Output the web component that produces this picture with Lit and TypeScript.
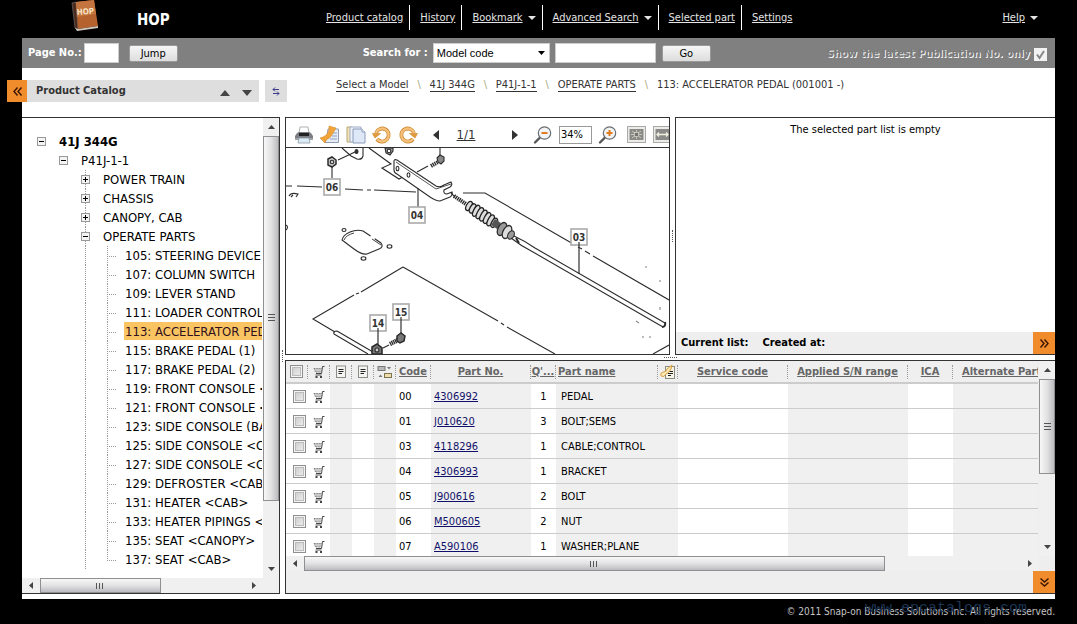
import { LitElement, html, svg, css, nothing } from "lit";
import { customElement, property, state } from "lit/decorators.js";
import { classMap } from "lit/directives/class-map.js";
import { styleMap } from "lit/directives/style-map.js";

const fontStack = css`"DejaVu Sans Condensed", "DejaVu Sans", sans-serif`;

/* ---------- icons ---------- */

const bookIcon = html`<svg width="30" height="32" viewBox="0 0 30 32" aria-hidden="true">
  <path d="M1 3 L5 2 L7 29 L4 28 Z" fill="#4a2a1c" stroke="#777" stroke-width=".6" />
  <path d="M5 2 L23 0 L27 26 L7 29 Z" fill="#b5622f" />
  <path d="M5 2 L23 0 L25 14 L6 17 Z" fill="#c4753f" />
  <path d="M4 28 L7 29 L27 26 L27 28 L6 31 Z" fill="#cfc6bb" />
  <text x="6" y="15" font-size="8" font-weight="700" fill="#f6e3c4" transform="rotate(-5 6 15)">HOP</text>
</svg>`;

const printerIcon = html`<svg width="20" height="20" viewBox="0 0 20 20" aria-hidden="true">
  <path d="M6 2 H14 L15 9 H5 Z" fill="#fff" stroke="#b0b0b0" />
  <path d="M3 8 L5 7 H15 L17 8 L19 11 V15 H1 V11 Z" fill="#7b7e82" />
  <path d="M5 9.500 H15" stroke="#222" stroke-width="3" />
  <path d="M1 14 H19" stroke="#c3c6c9" />
  <path d="M5 13 H15 L16 18 H4 Z" fill="#dcecf7" stroke="#8a9aa6" stroke-width=".8" />
</svg>`;

const exportIcon = html`<svg width="20" height="20" viewBox="0 0 20 20" aria-hidden="true">
  <path d="M8 4 H18.500 V17.500 H5 L7 11 Z" fill="#e6ecf5" stroke="#8f9db5" />
  <path d="M13 8 H17 M12 11 H17 M10 14 H17" stroke="#8fa0c0" />
  <path d="M9 1 L16 3 L13 8 Q11 13 6 15 L5 18 L0 13 L3 12 Q8 10 9 5 Z" fill="#f0a43a" stroke="#d98a22" stroke-width=".6" />
</svg>`;

const copyIcon = html`<svg width="20" height="20" viewBox="0 0 20 20" aria-hidden="true">
  <path d="M1 2 H6 V17 H1 Z" fill="#f3e2b4" stroke="#b9a874" />
  <path d="M4 2 H15 V17 H4 Z" fill="#eef2f9" stroke="#9fadc6" />
  <path d="M7 4 H16 L19 7 V18 H7 Z" fill="#dfe8f6" stroke="#8c9dbc" />
  <path d="M16 4 V7 H19" fill="#fff" stroke="#8c9dbc" />
</svg>`;

const rotateIcon = (clockwise: boolean) => html`<svg width="20" height="20" viewBox="0 0 20 20" aria-hidden="true">
  <g transform=${clockwise ? "" : "translate(20 0) scale(-1 1)"}>
    <path d="M15 14 A6.500 6.500 0 1 1 16 8" fill="none" stroke="#c9842a" stroke-width="3.800" />
    <path d="M15 14 A6.500 6.500 0 1 1 16 8" fill="none" stroke="#f5c07a" stroke-width="2.400" />
    <path d="M11.500 8.500 L19.500 8.500 L17 13 Z" fill="#e49a38" stroke="#c9842a" stroke-width=".6" />
  </g>
</svg>`;

const magnifier = (plus: boolean) => html`<svg width="20" height="20" viewBox="0 0 20 20" aria-hidden="true">
  <path d="M2 17.500 L7 12.500" stroke="#555" stroke-width="2.400" stroke-linecap="round" />
  <circle cx="11.500" cy="8" r="6.200" fill="#f1f3f5" stroke="#6b6f73" stroke-width="1.200" />
  <path d="M8.500 8 H14.500" stroke="#e07b1f" stroke-width="2" />
  ${plus ? svg`<path d="M11.500 5 V11" stroke="#e07b1f" stroke-width="2" />` : nothing}
</svg>`;

const fitIcon = (wide: boolean) => html`<svg width="20" height="18" viewBox="0 0 20 18" aria-hidden="true">
  <rect x=".5" y=".5" width="18" height="16" fill="#ecebe8" stroke="#a9a9a7" />
  <rect x="2.500" y="3" width="14" height="11" fill="#8a8b88" />
  ${wide
    ? svg`<path d="M4 8.500 H15 M6 6.500 L4 8.500 L6 10.500 M13 6.500 L15 8.500 L13 10.500" fill="none" stroke="#f0efdc" stroke-width="1.300" />`
    : svg`<path d="M5 5 L14 12 M14 5 L5 12 M9.500 4 V13 M4 8.500 H15" stroke="#d5d4c2" stroke-width=".8" />
        <rect x="7.500" y="6.500" width="4" height="4" fill="#74756f" stroke="#e5e4d5" stroke-width=".6" />`}
</svg>`;

const cartIcon = html`<svg width="12" height="12" viewBox="0 0 12 12" aria-hidden="true">
  <path d="M11.500 .5 H9.500 L8.500 7.500 H3" fill="none" stroke="#444" />
  <path d="M1 2.500 H9 L8.500 6 H2.500 Z" fill="#c9c9c9" stroke="#666" stroke-width=".8" stroke-dasharray="1 .6" />
  <path d="M2.500 9 H8.500" stroke="#555" />
  <rect x="2.500" y="10" width="2" height="2" fill="#444" /><rect x="7" y="10" width="2" height="2" fill="#444" />
</svg>`;

const noteIcon = html`<svg width="12" height="14" viewBox="0 0 12 14" aria-hidden="true">
  <rect x="1.500" y="1" width="9" height="11.500" fill="#f4f4f0" stroke="#8b8b88" />
  <path d="M3.500 4.500 H8.500 M3.500 6.500 H8.500 M3.500 8.500 H7" stroke="#222" />
</svg>`;

const swapIcon = html`<svg width="16" height="14" viewBox="0 0 16 14" aria-hidden="true">
  <rect x="1" y="1.500" width="7" height="4" fill="#b9b9b9" stroke="#777" />
  <rect x="7.500" y="8.500" width="7" height="4" fill="#f0dcaa" stroke="#7c7350" />
  <path d="M10 2 H14 L12 4.500 Z M1.500 12 H5.500 L3.500 9.500 Z" fill="#777" />
</svg>`;

const memoIcon = html`<svg width="16" height="16" viewBox="0 0 16 16" aria-hidden="true">
  <rect x="5.500" y="2.500" width="9" height="12" fill="#f7f3e6" stroke="#8b8b80" />
  <path d="M8 7.500 H13 M8 9.500 H13 M8 11.500 H11" stroke="#222" />
  <path d="M1 12 Q0 8 4 8 Q6 8 7 5 L12 1 L11 5 Q9 9 6 10 Q4 14 1 12 Z" fill="#f9e6bb" stroke="#d9a23a" />
</svg>`;

const doubleChevron = (dir: "left" | "right" | "down") => {
  const turn = { left: 180, right: 0, down: 90 }[dir];
  return html`<svg width="11" height="11" viewBox="0 0 11 11" aria-hidden="true">
    <path d="M1.500 1.500 L5 5.500 L1.500 9.500 M5.500 1.500 L9 5.500 L5.500 9.500" fill="none" stroke="#3a1505" stroke-width="1.400" transform="rotate(${turn} 5.5 5.5)" />
  </svg>`;
};

const triangle = (dir: "up" | "down" | "left" | "right", w = 8, h = 4) => {
  const d = {
    up: `M0 ${h} H${w} L${w / 2} 0 Z`,
    down: `M0 0 H${w} L${w / 2} ${h} Z`,
    left: `M${w} 0 V${h} L0 ${h / 2} Z`,
    right: `M0 0 V${h} L${w} ${h / 2} Z`,
  }[dir];
  return html`<svg width=${w} height=${h} viewBox="0 0 ${w} ${h}" aria-hidden="true"><path d=${d} fill="currentColor" /></svg>`;
};

/* ---------- scroll bar ---------- */

@customElement("scroll-track")
export class ScrollTrack extends LitElement {
  @property({ type: Boolean, reflect: true }) horizontal = false;
  @property({ type: Number }) size = 50;

  static styles = css`
    :host { display: flex; flex-direction: column; width: 16px; background: #f0f0f0; color: #444; }
    :host([horizontal]) { flex-direction: row; width: auto; height: 15px; }
    .arrow { flex: none; width: 16px; height: 18px; padding: 0; border: 0; background: none; color: inherit; display: flex; align-items: center; justify-content: center; }
    :host([horizontal]) .arrow { width: 18px; height: 15px; }
    .rail { flex: 1; min-height: 0; min-width: 0; display: flex; flex-direction: inherit; }
    .thumb { box-sizing: border-box; border: 1px solid #8f8f92; display: flex; align-items: center; justify-content: center; background: linear-gradient(90deg, #f7f7f7, #e2e2e4 50%, #bcbcc0); }
    :host([horizontal]) .thumb { background: linear-gradient(#f7f7f7, #e2e2e4 50%, #bcbcc0); }
    .grip { width: 7px; height: 8px; background: repeating-linear-gradient(#555 0 1px, transparent 1px 3px); }
    :host([horizontal]) .grip { width: 8px; height: 6px; background: repeating-linear-gradient(90deg, #555 0 1px, transparent 1px 3px); }
  `;

  render() {
    const side = this.horizontal ? "width" : "height";
    return html`
      <button class="arrow" aria-label="Scroll back">${this.horizontal ? triangle("left", 4, 7) : triangle("up", 7, 4)}</button>
      <div class="rail"><div class="thumb" style=${styleMap({ [side]: `${this.size}%` })}><span class="grip"></span></div></div>
      <button class="arrow" aria-label="Scroll forward">${this.horizontal ? triangle("right", 4, 7) : triangle("down", 7, 4)}</button>
    `;
  }
}

/* ---------- catalog tree ---------- */

interface TreeRow { level: number; label: string; open?: boolean; }

const treeRows: TreeRow[] = [
  { level: 0, label: "41J 344G", open: true },
  { level: 1, label: "P41J-1-1", open: true },
  { level: 2, label: "POWER TRAIN", open: false },
  { level: 2, label: "CHASSIS", open: false },
  { level: 2, label: "CANOPY, CAB", open: false },
  { level: 2, label: "OPERATE PARTS", open: true },
  ...[
    "105: STEERING DEVICE", "107: COLUMN SWITCH", "109: LEVER STAND", "111: LOADER CONTROL",
    "113: ACCELERATOR PEDAL", "115: BRAKE PEDAL (1)", "117: BRAKE PEDAL (2)",
    "119: FRONT CONSOLE <CANOPY>", "121: FRONT CONSOLE <CAB>", "123: SIDE CONSOLE (BASE)",
    "125: SIDE CONSOLE <CANOPY>", "127: SIDE CONSOLE <CAB>", "129: DEFROSTER <CAB>",
    "131: HEATER <CAB>", "133: HEATER PIPINGS <CAB>", "135: SEAT <CANOPY>", "137: SEAT <CAB>",
  ].map((label) => ({ level: 3, label })),
];

@customElement("catalog-tree")
export class CatalogTree extends LitElement {
  @state() private selected = "113: ACCELERATOR PEDAL";

  static styles = css`
    :host { display: grid; grid-template: minmax(0, 1fr) auto / minmax(0, 1fr) auto; border: 1px solid #333; border-left: 0; font: 13px/19px ${fontStack}; overflow: hidden; background: #fff; }
    .rows { overflow: hidden; list-style: none; margin: 0 1px 0 0; padding: 14px 0 6px 15px; }
    .row { display: flex; height: 19px; white-space: nowrap; }
    .cell { flex: none; width: 22px; height: 19px; display: flex; align-items: center; }
    .line { background: repeating-linear-gradient(#999 0 1px, transparent 1px 2px) 4px 0 / 1px 100% no-repeat; }
    .leaf { background: repeating-linear-gradient(#999 0 1px, transparent 1px 2px) 4px 0 / 1px 100% no-repeat, repeating-linear-gradient(90deg, #999 0 1px, transparent 1px 2px) 4px 10px / 10px 1px no-repeat; }
    .last { background-size: 1px 10px, 10px 1px; }
    .box { width: 9px; height: 9px; padding: 0; border: 1px solid #999; background: linear-gradient(#000, #000) center / 5px 1px no-repeat, #f4f4f4; }
    .plus { background: linear-gradient(#000, #000) center / 5px 1px no-repeat, linear-gradient(#000, #000) center / 1px 5px no-repeat, #f4f4f4; }
    .label { color: #000; text-decoration: none; margin-left: -1px; padding: 0 1px; height: 18px; line-height: 19px; }
    .root { font-weight: 700; }
    .on { background: #fac463; color: #30101c; }
    .corner { background: #f0f0f0; }
  `;

  render() {
    return html`
      <ul class="rows">
        ${treeRows.map((row, i) => html`<li class="row">
          ${Array.from({ length: row.level }, (_, depth) =>
            html`<span class=${classMap({ cell: true, line: depth === 2 })}></span>`)}
          ${row.open === undefined
            ? html`<span class=${classMap({ cell: true, leaf: true, last: i === treeRows.length - 1 })}></span>`
            : html`<span class=${classMap({ cell: true, line: row.level === 2 })}>
                <button class=${classMap({ box: true, plus: !row.open })} aria-label="Toggle ${row.label}"></button>
              </span>`}
          <a class=${classMap({ label: true, root: row.level === 0, on: row.label === this.selected })} href="#"
            @click=${(e: Event) => { e.preventDefault(); this.selected = row.label; }}>${row.label}</a>
        </li>`)}
      </ul>
      <scroll-track .size=${86}></scroll-track>
      <scroll-track horizontal .size=${59}></scroll-track>
      <span class="corner"></span>
    `;
  }
}

/* ---------- parts drawing ---------- */

const callout = (label: string, x: number, y: number) => svg`
  <rect x=${x - 8} y=${y - 8} width="16" height="16" fill="#fff" stroke="#aaa" stroke-width="1.600" />
  <text x=${x} y=${y + 4} text-anchor="middle" font-size="10" font-weight="700" font-family="DejaVu Sans Condensed, DejaVu Sans, sans-serif" fill="#333">${label}</text>`;

const bellows = Array.from({ length: 8 }, (_, i) => svg`
  <ellipse cx=${469 + i * 3.6} cy=${206 + i * 2.4} rx="2.600" ry=${5 + (i > 1 && i < 7 ? 1 : 0)} transform="rotate(-58 ${469 + i * 3.6} ${206 + i * 2.4}) rotate(86 ${469 + i * 3.6} ${206 + i * 2.4})" fill="#ddd" stroke="#222" stroke-width="1.300" />`);

const drawing = html`<svg class="drawing" viewBox="286 148 383 206" preserveAspectRatio="xMinYMin slice" role="img" aria-label="Accelerator pedal assembly">
  <g fill="none" stroke="#2c2c2c" stroke-width="1.100">
    <path d="M342 148 L351 156 L357 159 Q362 160 363 156 V148" />
    <ellipse cx="356.500" cy="151.500" rx="1.500" ry="2" fill="#333" />
    <path d="M338 160 L355 152 M369 148 L391 164 L382 168 L399 179 L410 173 M440 148 V155" />
    <path d="M328 159 L332 157 L336 160 L336 164 L332 167 L328 165 Z" fill="#ccc" stroke-width="1.500" /><circle cx="332" cy="162" r="1.800" />
    <path d="M385 148 L386 153 L390 155 L393 151 L393 148 Z" fill="#999" /><circle cx="389" cy="151" r="1.800" fill="#fff" />
    <path d="M332 167 V178" />
    <path d="M394 161 Q394 159 397 160 L436 186 Q440 188 444 185 L451 182 Q453 185 450 187 L444 190 Q443 194 447 194 L452 192 Q453 195 450 197 L440 201 Q436 201 430 197 L397 174 Q394 173 394 170 Z" fill="#fff" />
    <path d="M396 162 L436 189 L451 184" stroke-width=".8" />
    <ellipse cx="397.500" cy="168.500" rx="1.400" ry="2.200" /><ellipse cx="408.500" cy="175" rx="1.400" ry="2.200" />
    <path d="M417 172 L428 166" />
    <path d="M431 166 L438 162" stroke-width="4" stroke-dasharray="1.300 .8" /><path d="M437 158 L440 155 L444 157 L444 161 L441 164 L438 162 Z" fill="#888" />
    <path d="M418 188 V207" />
    <path d="M286 186 L292 186 M297 186 L322 187 M345 189 L363 190 M367 190 L371 190 M374 190 L416 192 M463 193 L485 193 L575 245 M578 247 L582 249 M585 251 L590 254 M593 256 L669 300" />
    <path d="M289 196 Q291 192 298 194 L296 197 M291 197 L293 195" /><path d="M286 225 Q289 227 286 230" />
    <path d="M454 196 L466 204" stroke-width="4" stroke-dasharray="1.400 .7" /><path d="M451 193 L455 197" />
    ${bellows}
    <path d="M493 222 L499 226" stroke-width="7" stroke="#555" />
    <ellipse cx="502" cy="229" rx="4" ry="7" transform="rotate(28 502 229)" fill="#999" stroke-width="1.300" />
    <ellipse cx="507" cy="232" rx="4" ry="7" transform="rotate(28 507 232)" fill="#ddd" stroke-width="1.300" />
    <ellipse cx="511" cy="235" rx="3" ry="4.500" transform="rotate(28 511 235)" fill="#999" />
    <path d="M514 236 Q525 241 535 248 L665 323 M511 238 Q521 246 533 252 L663 327" />
    <path d="M516 238 L519 243 M662 327 Q666 327 665 322" stroke-width="2" />
    <path d="M342 240 Q343 235 350 232 Q357 229 363 231 L381 243 Q384 247 379 249 L367 254 Q362 255 354 249 Z" stroke-dasharray="34 5 60" />
    <path d="M344 240 Q346 235 354 233 M372 239 L381 245" stroke-width=".9" />
    <ellipse cx="344" cy="230" rx="2" ry="1.500" /><ellipse cx="389.500" cy="246.500" rx="2.400" ry="1.700" /><ellipse cx="363.500" cy="258.500" rx="2.400" ry="1.700" />
    <path d="M403 267 L361 292 M359 293 L356 294 M354 295 L313 319 L335 332 M403 267 L498 321 M501 323 L504 325 M507 327 L555 354 M653 354 L669 345" />
    <path d="M337 331 L373 352 M334 334 L368 354 M337 331 Q333 331 334 334" />
    <path d="M372 347 L377 344 L382 348 L382 354 H372 Z" fill="#777" stroke-width="1.600" /><circle cx="377" cy="350" r="2" fill="#ccc" />
    <path d="M383 348 L389 345" /><path d="M390 344 L398 340" stroke-width="4.500" stroke-dasharray="1.300 .6" />
    <path d="M397 336 L401 333 L405 336 L404 341 L400 343 L397 341 Z" fill="#777" stroke-width="1.500" />
    <path d="M646 266 V268 M660 280 V282 M660 307 V310 M636 321 L639 323 M643 336 V338 M650 336 V338" stroke="#888" />
  </g>
  ${callout("06", 332, 187)} ${callout("04", 417, 215)} ${callout("03", 579, 237)} ${callout("14", 378, 323)} ${callout("15", 401, 312)}
  <path d="M579 242 V274 M378 328 V345 M401 317 V333" stroke="#333" stroke-width="1.200" />
</svg>`;

@customElement("drawing-panel")
export class DrawingPanel extends LitElement {
  static styles = css`
    :host { display: flex; flex-direction: column; border: 1px solid #333; overflow: hidden; background: #fff; font: 11px/14px ${fontStack}; }
    .tools { display: flex; align-items: center; height: 30px; padding: 4px 0 0 8px; gap: 6px; border-bottom: 1px solid #333; box-sizing: border-box; flex: none; color: #333; }
    .tool { flex: none; width: 20px; height: 20px; padding: 0; border: 0; background: none; color: inherit; display: flex; align-items: center; justify-content: center; }
    .pages { display: flex; align-items: center; gap: 3px; padding: 0 2px; }
    .page { font-size: 13px; line-height: 16px; color: #333; width: 34px; margin-right: 19px; text-align: center; }
    .zoom { flex: none; width: 33px; height: 18px; box-sizing: border-box; border: 1px solid #999; padding: 0 1px; font: 11px ${fontStack}; }
    .fits { display: flex; gap: 6px; margin-left: 3px; }
    .drawing { flex: 1; min-height: 0; width: 100%; display: block; }
  `;

  render() {
    return html`
      <div class="tools">
        <button class="tool" aria-label="Print">${printerIcon}</button>
        <button class="tool" aria-label="Export">${exportIcon}</button>
        <button class="tool" aria-label="Copy">${copyIcon}</button>
        <button class="tool" aria-label="Rotate left">${rotateIcon(false)}</button>
        <button class="tool" aria-label="Rotate right">${rotateIcon(true)}</button>
        <div class="pages">
          <button class="tool" aria-label="Previous page">${triangle("left", 6, 10)}</button>
          <a class="page" href="#">1/1</a>
          <button class="tool" aria-label="Next page">${triangle("right", 6, 10)}</button>
        </div>
        <button class="tool" aria-label="Zoom out">${magnifier(false)}</button>
        <input class="zoom" aria-label="Zoom level" value="34%" />
        <button class="tool" aria-label="Zoom in">${magnifier(true)}</button>
        <div class="fits">
          <button class="tool" aria-label="Fit page">${fitIcon(false)}</button>
          <button class="tool" aria-label="Fit width">${fitIcon(true)}</button>
        </div>
      </div>
      ${drawing}
    `;
  }
}

/* ---------- parts table ---------- */

const columns: { width?: number; label?: string; icon?: unknown; name: string; lead?: boolean }[] = [
  { width: 22, name: "Select all" },
  { width: 22, name: "Cart", icon: cartIcon },
  { width: 22, name: "Note", icon: noteIcon },
  { width: 22, name: "Memo", icon: noteIcon },
  { width: 22, name: "Interchange", icon: swapIcon },
  { width: 35, name: "Code", label: "Code" },
  { width: 100, name: "Part No.", label: "Part No." },
  { width: 25, name: "Quantity", label: "Q'..." },
  { width: 102, name: "Part name", label: "Part name", lead: true },
  { width: 20, name: "Remark", icon: memoIcon },
  { width: 110, name: "Service code", label: "Service code" },
  { width: 120, name: "Applied S/N range", label: "Applied S/N range" },
  { width: 45, name: "ICA", label: "ICA" },
  { name: "Alternate Part", label: "Alternate Part", lead: true },
];

const parts: [string, string, number, string][] = [
  ["00", "4306992", 1, "PEDAL"],
  ["01", "J010620", 3, "BOLT;SEMS"],
  ["03", "4118296", 1, "CABLE;CONTROL"],
  ["04", "4306993", 1, "BRACKET"],
  ["05", "J900616", 2, "BOLT"],
  ["06", "M500605", 2, "NUT"],
  ["07", "A590106", 1, "WASHER;PLANE"],
];

@customElement("parts-table")
export class PartsTable extends LitElement {
  static styles = css`
    :host { display: grid; grid-template: minmax(0, 1fr) auto auto / minmax(0, 1fr) auto; border: 1px solid #333; border-right: 0; overflow: hidden; background: #eee; font: 11px/14px ${fontStack}; }
    .view { overflow: hidden; background: #fff; margin-right: 1px; }
    .table { border-collapse: separate; border-spacing: 0; table-layout: fixed; width: 100%; min-width: 767px; }
    .head { height: 23px; box-sizing: border-box; padding: 0; background: #efefef; border-bottom: 2px solid #ccc; font-weight: 700; color: #666; white-space: nowrap; overflow: hidden; }
    .slot { display: flex; align-items: center; justify-content: center; height: 14px; border-right: 1px dotted #999; }
    .lead { justify-content: flex-start; padding-left: 2px; }
    .final { padding-left: 9px; }
    .sort { padding: 0; border: 0; background: none; font: inherit; color: inherit; text-decoration: underline; }
    .cell { height: 25px; box-sizing: border-box; padding: 1px 0 0 3px; border-bottom: 1px solid #ccc; color: #000; white-space: nowrap; vertical-align: middle; }
    .shade { background: #f0f0f0; }
    .name { padding-left: 5px; }
    .mid { padding-left: 0; text-align: center; }
    .icon { display: flex; justify-content: center; }
    .tick { appearance: none; display: block; margin: 0 0 0 7px; width: 13px; height: 13px; border: 1px solid #8e8f8f; background: linear-gradient(135deg, #c9c9cb, #f2f2f2); box-shadow: inset 0 0 0 1px #f4f4f4, inset 0 0 0 2px #bbb; }
    .all { margin-left: 0; }
    .part { color: #10106a; }
    .base { grid-column: 1 / -1; display: flex; justify-content: flex-end; height: 22px; }
    .more { width: 22px; height: 22px; padding: 0; border: 0; background: #f08c2c; display: flex; align-items: center; justify-content: center; }
  `;

  render() {
    return html`
      <div class="view">
        <table class="table">
          <colgroup>${columns.map((c) => html`<col style=${styleMap(c.width ? { width: `${c.width}px` } : {})} />`)}</colgroup>
          <thead><tr>
            ${columns.map((c, i) => html`<th class="head" scope="col" aria-label=${c.name}>
              <div class=${classMap({ slot: true, lead: !!c.lead, final: i === columns.length - 1 })}>
                ${i === 0 ? html`<input class="tick all" type="checkbox" aria-label="Select all" />` : c.label ? html`<button class="sort">${c.label}</button>` : c.icon}
              </div></th>`)}
          </tr></thead>
          <tbody>
            ${parts.map(([code, part, qty, name]) => html`<tr>
              <td class="cell mid"><input class="tick" type="checkbox" aria-label="Select ${part}" /></td>
              <td class="cell mid"><span class="icon">${cartIcon}</span></td>
              <td class="cell shade"></td><td class="cell"></td><td class="cell shade"></td>
              <td class="cell">${code}</td>
              <td class="cell shade"><a class="part" href="#">${part}</a></td>
              <td class="cell mid">${qty}</td>
              <td class="cell shade name">${name}</td>
              <td class="cell shade"></td><td class="cell"></td><td class="cell shade"></td><td class="cell"></td><td class="cell shade"></td>
            </tr>`)}
          </tbody>
        </table>
      </div>
      <scroll-track .size=${60}></scroll-track>
      <scroll-track horizontal .size=${81}></scroll-track>
      <span></span>
      <div class="base"><button class="more" aria-label="Collapse table">${doubleChevron("down")}</button></div>
    `;
  }
}

/* ---------- page ---------- */

const menu: { label: string; drop?: boolean }[] = [
  { label: "Product catalog" }, { label: "History" }, { label: "Bookmark", drop: true },
  { label: "Advanced Search", drop: true }, { label: "Selected part" }, { label: "Settings" },
];

const trail = ["Select a Model", "41J 344G", "P41J-1-1", "OPERATE PARTS"];

@customElement("app-root")
export class AppRoot extends LitElement {
  static styles = css`
    :host { display: flex; flex-direction: column; box-sizing: border-box; height: 100vh; min-height: 480px; padding: 0 22px; background: #000; font: 11px/14px ${fontStack}; color: #222; overflow: hidden; }
    .header { display: flex; height: 38px; flex: none; color: #eee; }
    .brand { display: flex; width: 293px; flex: none; padding-left: 49px; box-sizing: border-box; }
    .title { margin: 10px 0 0 36px; font-size: 15px; line-height: 20px; font-weight: 700; color: #fff; }
    .menu { display: flex; flex: 1; padding-top: 5px; }
    .item { display: flex; align-items: center; gap: 5px; height: 25px; padding: 0 6px 0 10px; border-left: 1px solid #fff; color: #e4e4e4; white-space: nowrap; }
    .item:first-child, .help { border-left-color: transparent; }
    .help { margin-left: auto; padding-right: 17px; }
    .toplink { color: inherit; }
    .bar { display: flex; align-items: center; height: 30px; flex: none; background: #808080; color: #fff; font-weight: 700; padding: 0 8px 0 6px; }
    .field { height: 20px; box-sizing: border-box; border: 1px solid #ccc; background: #fff; margin-left: 5px; padding: 0 3px; }
    .page { width: 35px; margin-left: 2px; }
    .push { height: 17px; width: 49px; margin-left: 10px; padding: 0; box-sizing: border-box; border: 1px solid #999; border-radius: 2px; background: linear-gradient(#f6f6f6, #ddd); font: 11px/13px ${fontStack}; color: #000; }
    .search { display: flex; align-items: center; margin-left: 185px; }
    .pick { appearance: none; width: 117px; height: 20px; margin-left: 5px; padding: 0 3px; box-sizing: border-box; border: 1px solid #ccc; border-radius: 0; font: 11px "Liberation Sans", Arial, sans-serif; color: #000; background: url("data:image/svg+xml,%3Csvg xmlns='http://www.w3.org/2000/svg' width='7' height='4'%3E%3Cpath d='M0 0h7L3.500 4z'/%3E%3C/svg%3E") right 4px center no-repeat #fff; }
    .query { width: 101px; margin-left: 5px; }
    .go { margin-left: 6px; }
    .latest { display: flex; align-items: center; gap: 4px; margin-left: auto; padding-top: 2px; color: #7a7a7a; text-shadow: 1px 1px 0 #f4f4f4; white-space: nowrap; }
    .latesttick { appearance: none; width: 13px; height: 13px; margin: 0; background: #f2f2f2 url("data:image/svg+xml,%3Csvg xmlns='http://www.w3.org/2000/svg' width='13' height='13'%3E%3Cpath d='M3 6.500l2.500 3.500L10 3' fill='none' stroke='%23888' stroke-width='2'/%3E%3C/svg%3E") center no-repeat; }
    .main { flex: 1; min-height: 0; display: flex; flex-direction: column; background: #fff; padding: 12px 0 5px; margin-bottom: 25px; }
    .strip { display: flex; height: 22px; flex: none; margin-bottom: 15px; }
    .fold { width: 20px; height: 22px; margin: 0 0 0 -15px; padding: 0; border: 0; background: #f08c2c; display: flex; align-items: center; justify-content: center; }
    .caption { display: flex; align-items: center; width: 232px; box-sizing: border-box; padding: 0 1px 0 9px; background: #dedede; color: #444; }
    .heading { margin: 0 auto 0 0; font-size: 11px; line-height: 14px; color: #333; }
    .step { display: flex; padding: 3px 6px 0; border: 0; background: none; color: #444; }
    .sync { width: 22px; height: 22px; margin-left: 6px; padding: 0; border: 0; background: #dedede; color: #3b3b8a; display: flex; align-items: center; justify-content: center; }
    .trail { display: flex; list-style: none; margin: -2px 0 0 49px; padding: 0; line-height: 14px; white-space: nowrap; height: 14px; align-self: flex-start; }
    .crumb { display: flex; color: #333; }
    .crumb + .crumb::before { content: "\\\\"; width: 21px; text-align: center; color: #a9a97c; }
    .link { color: inherit; text-decoration: none; border-bottom: 1px solid #333; height: 13px; }
    .work { flex: 1; min-height: 0; display: grid; grid-template-columns: 258px 5px minmax(0, 1fr); }
    .right { display: grid; grid-template-rows: 238px 5px minmax(0, 1fr); min-height: 0; }
    .upper { display: grid; grid-template-columns: 385px 5px minmax(0, 1fr); min-height: 0; }
    .gutter { display: flex; align-items: center; justify-content: center; }
    .dotsv::after { content: ""; height: 12px; border-left: 1px dotted #555; }
    .dotsh::after { content: ""; width: 13px; border-top: 1px dotted #555; }
    .list { display: flex; flex-direction: column; border: 1px solid #333; border-right: 0; }
    .empty { margin: 0; padding-top: 5px; flex: 1; text-align: center; color: #000; }
    .listbar { display: flex; align-items: center; gap: 14px; height: 22px; padding-left: 5px; background: #eee; font-weight: 700; color: #000; }
    .next { width: 22px; height: 22px; margin-left: auto; padding: 0; border: 0; background: #f08c2c; display: flex; align-items: center; justify-content: center; }
    .footer { position: absolute; left: 0; right: 0; bottom: 0; height: 25px; padding: 0 22px; display: flex; align-items: center; justify-content: flex-end; color: #c4c4c4; font-size: 10px; }
    .mark { position: absolute; right: 50px; top: 0; font: 15px/20px "Liberation Mono", monospace; color: #1c3554; }
  `;

  render() {
    return html`
      <header class="header">
        <div class="brand">${bookIcon}<h1 class="title">HOP</h1></div>
        <nav class="menu">
          ${menu.map((m) => html`<span class="item"><a class="toplink" href="#">${m.label}</a>${m.drop ? triangle("down") : nothing}</span>`)}
          <span class="item help"><a class="toplink" href="#">Help</a>${triangle("down")}</span>
        </nav>
      </header>
      <div class="bar">
        <label for="page">Page No.:</label><input id="page" class="field page" />
        <button class="push">Jump</button>
        <div class="search">
          <label for="kind">Search for :</label>
          <select id="kind" class="pick"><option>Model code</option></select>
          <input class="field query" aria-label="Search text" />
          <button class="push go">Go</button>
        </div>
        <label class="latest">Show the latest Publication No. only<input class="latesttick" type="checkbox" checked disabled /></label>
      </div>
      <main class="main">
        <div class="strip">
          <button class="fold" aria-label="Fold catalog">${doubleChevron("left")}</button>
          <div class="caption">
            <h2 class="heading">Product Catalog</h2>
            <button class="step" aria-label="Previous">${triangle("up", 10, 6)}</button>
            <button class="step" aria-label="Next">${triangle("down", 10, 6)}</button>
          </div>
          <button class="sync" aria-label="Synchronise">
            <svg width="8" height="9" viewBox="0 0 8 9" aria-hidden="true"><path d="M7 2.500 H1 M3 .5 L1 2.500 L3 4.500 M1 6.500 H7 M5 4.500 L7 6.500 L5 8.500" fill="none" stroke="currentColor" /></svg>
          </button>
          <ol class="trail">
            ${trail.map((t) => html`<li class="crumb"><a class="link" href="#">${t}</a></li>`)}
            <li class="crumb">113: ACCELERATOR PEDAL (001001 -)</li>
          </ol>
        </div>
        <div class="work">
          <catalog-tree></catalog-tree>
          <div class="gutter dotsv"></div>
          <div class="right">
            <div class="upper">
              <drawing-panel></drawing-panel>
              <div class="gutter dotsv"></div>
              <section class="list">
                <p class="empty">The selected part list is empty</p>
                <div class="listbar"><span>Current list:</span><span>Created at:</span>
                  <button class="next" aria-label="Expand list">${doubleChevron("right")}</button></div>
              </section>
            </div>
            <div class="gutter dotsh"></div>
            <parts-table></parts-table>
          </div>
        </div>
      </main>
      <footer class="footer"><span class="mark">www.epcatalogs.com</span>© 2011 Snap-on Business Solutions Inc. All rights reserved.</footer>
    `;
  }
}
